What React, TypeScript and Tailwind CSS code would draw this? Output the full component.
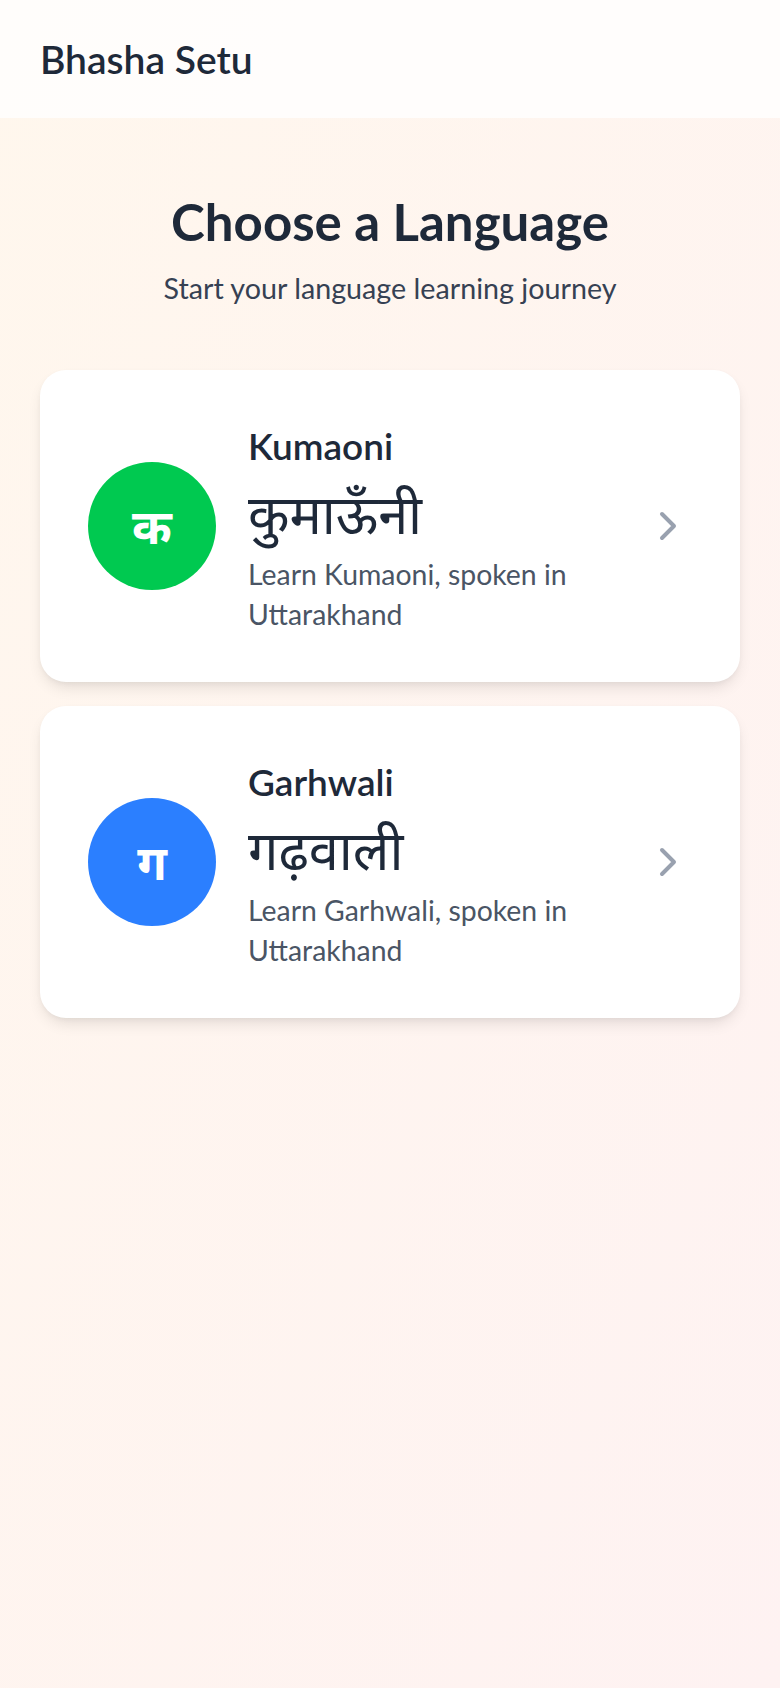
import { ChevronRight } from 'lucide-react';

const languages = [
    {
        id: 'kumaoni',
        name: 'Kumaoni',
        native: 'कुमाऊँनी',
        letter: 'क',
        description: 'Learn Kumaoni, spoken in Uttarakhand',
        color: 'bg-[#00c950]',
    },
    {
        id: 'garhwali',
        name: 'Garhwali',
        native: 'गढ़वाली',
        letter: 'ग',
        description: 'Learn Garhwali, spoken in Uttarakhand',
        color: 'bg-[#2b7fff]',
    },
];

export default function App() {
    return (
        <div className="min-h-screen bg-linear-to-br from-[#fff7ed] to-[#fef2f2] font-['Lato','Noto_Sans','Noto_Sans_Devanagari',sans-serif] text-[#1e2939]">
            <header className="flex h-[118px] items-center bg-white/80 px-10">
                <h1 className="text-[39px] font-semibold">Bhasha Setu</h1>
            </header>

            <main className="px-10 pt-[72px]">
                <div className="mb-[62px] text-center">
                    <h2 className="text-[51px] font-bold leading-[64px]">Choose a Language</h2>
                    <p className="mt-[14px] text-[28.7px] leading-[40px] text-[#364153]">
                        Start your language learning journey
                    </p>
                </div>

                <div className="flex flex-col gap-6">
                    {languages.map((lang) => (
                        <button
                            key={lang.id}
                            className="flex items-center rounded-[26px] bg-white p-12 text-left shadow-[0_8px_16px_-4px_rgba(0,0,0,0.12),0_2px_6px_-2px_rgba(0,0,0,0.06)]"
                        >
                            <div
                                className={`flex h-32 w-32 shrink-0 items-center justify-center rounded-full text-[48px] font-bold text-white ${lang.color}`}
                            >
                                {lang.letter}
                            </div>
                            <div className="ml-8 flex-1">
                                <h3 className="text-[37px] font-semibold leading-[56px]">{lang.name}</h3>
                                <p className="text-[54px] leading-[80px]">{lang.native}</p>
                                <p className="text-[28.4px] leading-[40px] text-[#4a5565]">{lang.description}</p>
                            </div>
                            <ChevronRight className="ml-8 h-12 w-12 shrink-0 text-[#99a1af]" strokeWidth={2} />
                        </button>
                    ))}
                </div>
            </main>
        </div>
    );
}
